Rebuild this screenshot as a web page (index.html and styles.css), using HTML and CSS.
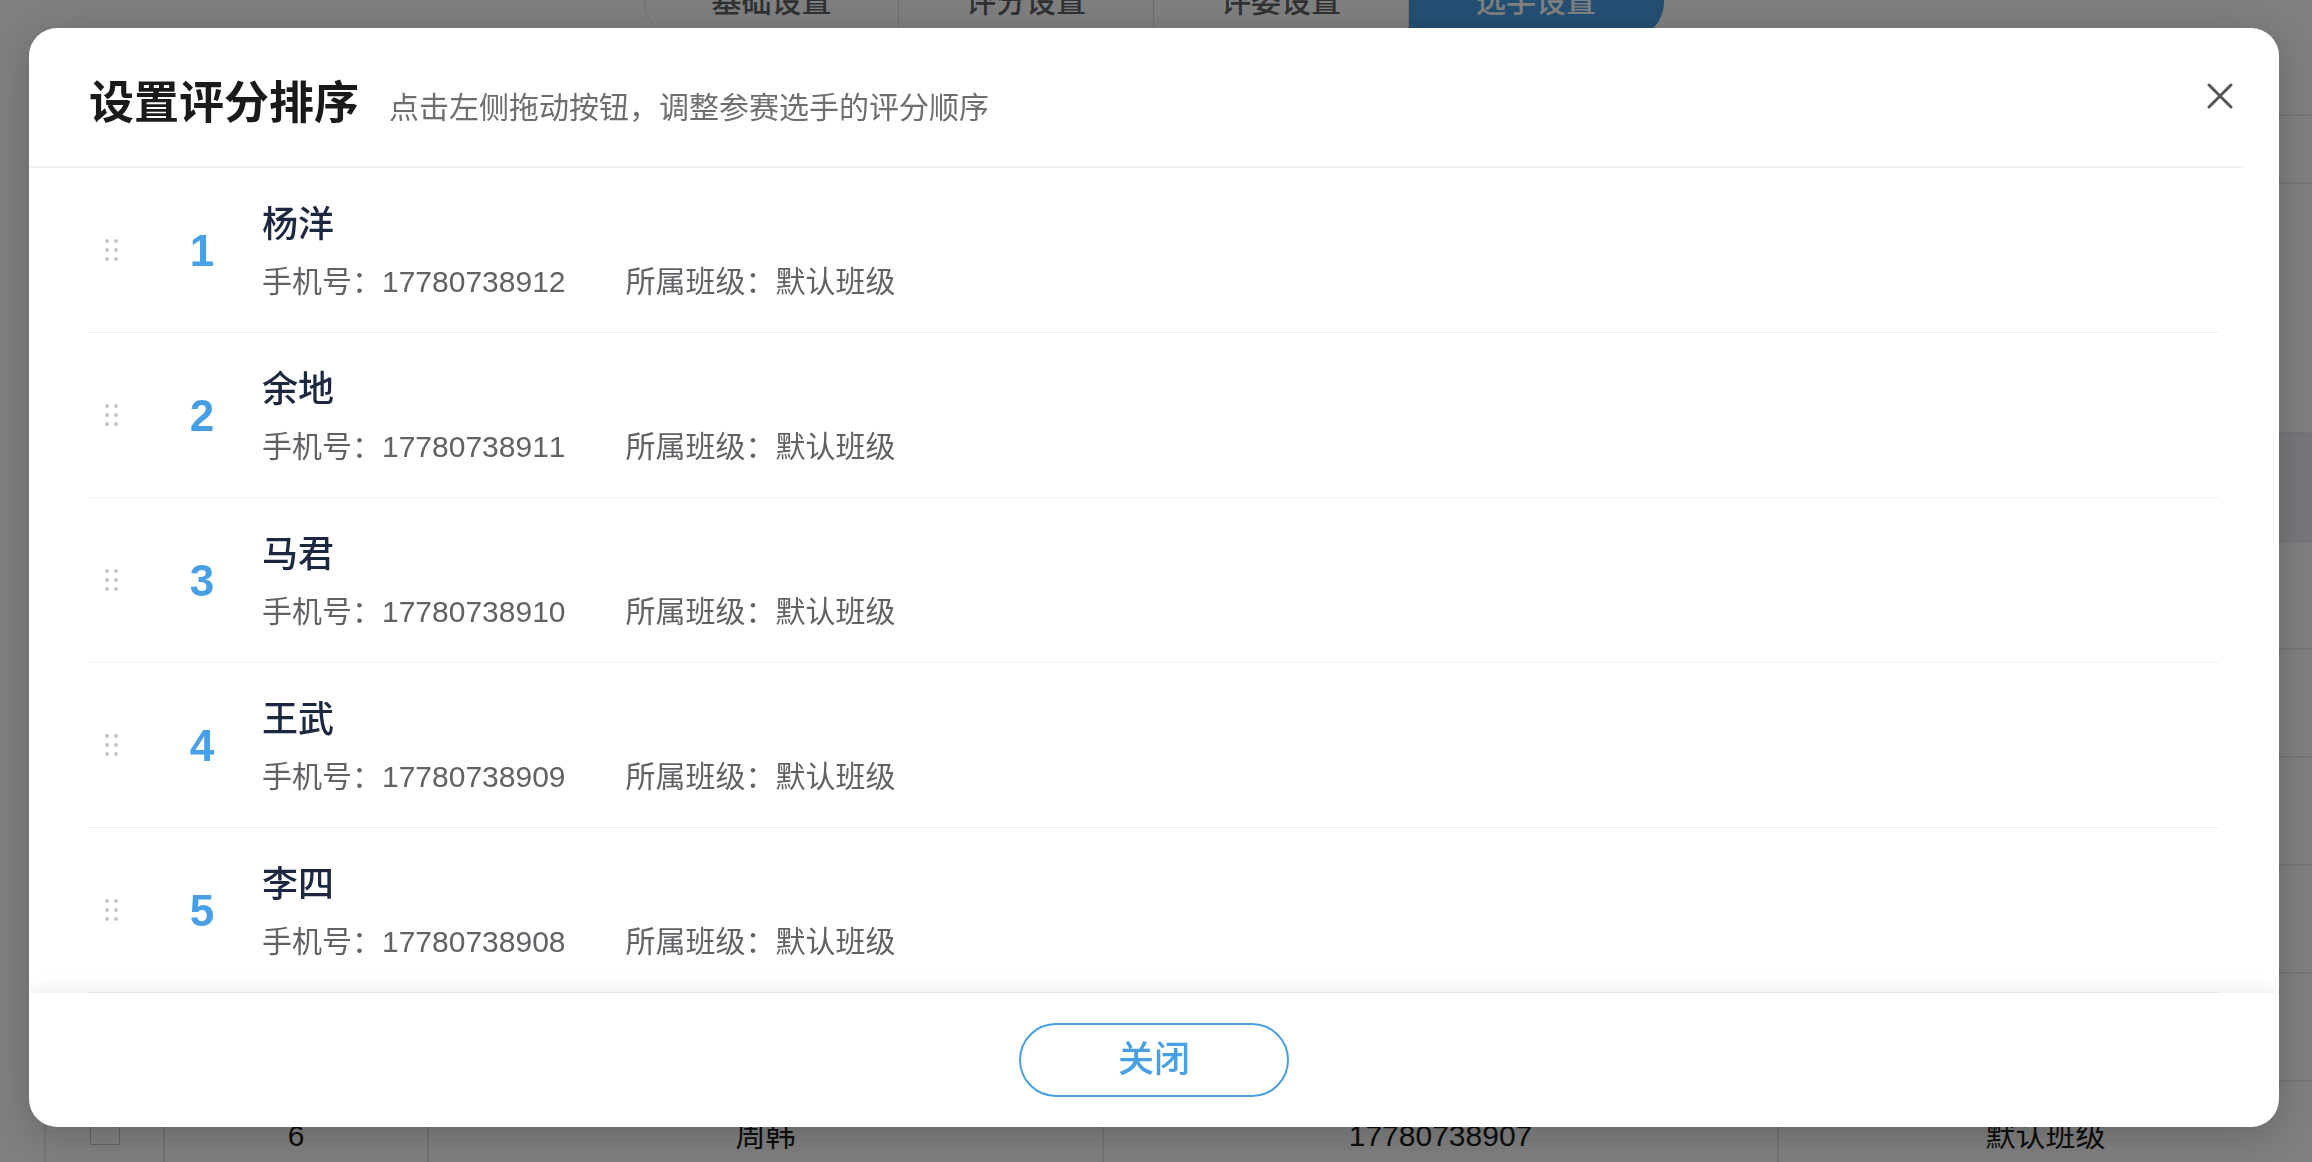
FILE: index.html
```html
<!DOCTYPE html>
<html lang="zh-CN">
<head>
  <meta charset="UTF-8">
  <meta name="viewport" content="width=device-width, initial-scale=1.0">
  <title>选手设置</title>
  <link rel="stylesheet" href="styles.css">
</head>
<body>
  <div class="page">
    <nav class="tabs">
      <a href="#basic" class="tab">基础设置</a>
      <a href="#score" class="tab">评分设置</a>
      <a href="#judge" class="tab">评委设置</a>
      <a href="#player" class="tab tab-active">选手设置</a>
    </nav>

    <div class="toolbar"></div>

    <table class="players">
      <thead>
        <tr><th class="col-check"></th><th class="col-index"></th><th class="col-name"></th><th class="col-phone"></th><th></th></tr>
      </thead>
      <tbody>
        <tr><td></td><td></td><td></td><td></td><td></td></tr>
        <tr><td></td><td></td><td></td><td></td><td></td></tr>
        <tr><td></td><td></td><td></td><td></td><td></td></tr>
        <tr><td></td><td></td><td></td><td></td><td></td></tr>
        <tr><td></td><td></td><td></td><td></td><td></td></tr>
        <tr>
          <td><input type="checkbox" class="check" aria-label="选择周韩"></td>
          <td>6</td>
          <td>周韩</td>
          <td>17780738907</td>
          <td>默认班级</td>
        </tr>
      </tbody>
    </table>
  </div>

  <div class="overlay">
    <section class="dialog" role="dialog" aria-modal="true" aria-labelledby="dialog-title">
      <header class="dialog-header">
        <h1 class="dialog-title" id="dialog-title">设置评分排序</h1>
        <p class="dialog-tip">点击左侧拖动按钮，调整参赛选手的评分顺序</p>
        <button type="button" class="dialog-close" aria-label="关闭">
          <svg viewBox="0 0 26 26" width="26" height="26" fill="none" stroke="currentColor" stroke-width="3" stroke-linecap="round">
            <path d="M2 2l22 22M24 2L2 24"/>
          </svg>
        </button>
      </header>

      <ol class="player-list">
        <li class="player">
          <button type="button" class="drag" aria-label="拖动">
            <svg viewBox="0 0 14 22" width="14" height="22" fill="currentColor"><circle cx="2" cy="2" r="2"/><circle cx="11" cy="2" r="2"/><circle cx="2" cy="11" r="2"/><circle cx="11" cy="11" r="2"/><circle cx="2" cy="20" r="2"/><circle cx="11" cy="20" r="2"/></svg>
          </button>
          <span class="rank">1</span>
          <div class="info">
            <h2 class="name">杨洋</h2>
            <p class="meta"><span>手机号：17780738912</span><span>所属班级：默认班级</span></p>
          </div>
        </li>
        <li class="player">
          <button type="button" class="drag" aria-label="拖动">
            <svg viewBox="0 0 14 22" width="14" height="22" fill="currentColor"><circle cx="2" cy="2" r="2"/><circle cx="11" cy="2" r="2"/><circle cx="2" cy="11" r="2"/><circle cx="11" cy="11" r="2"/><circle cx="2" cy="20" r="2"/><circle cx="11" cy="20" r="2"/></svg>
          </button>
          <span class="rank">2</span>
          <div class="info">
            <h2 class="name">余地</h2>
            <p class="meta"><span>手机号：17780738911</span><span>所属班级：默认班级</span></p>
          </div>
        </li>
        <li class="player">
          <button type="button" class="drag" aria-label="拖动">
            <svg viewBox="0 0 14 22" width="14" height="22" fill="currentColor"><circle cx="2" cy="2" r="2"/><circle cx="11" cy="2" r="2"/><circle cx="2" cy="11" r="2"/><circle cx="11" cy="11" r="2"/><circle cx="2" cy="20" r="2"/><circle cx="11" cy="20" r="2"/></svg>
          </button>
          <span class="rank">3</span>
          <div class="info">
            <h2 class="name">马君</h2>
            <p class="meta"><span>手机号：17780738910</span><span>所属班级：默认班级</span></p>
          </div>
        </li>
        <li class="player">
          <button type="button" class="drag" aria-label="拖动">
            <svg viewBox="0 0 14 22" width="14" height="22" fill="currentColor"><circle cx="2" cy="2" r="2"/><circle cx="11" cy="2" r="2"/><circle cx="2" cy="11" r="2"/><circle cx="11" cy="11" r="2"/><circle cx="2" cy="20" r="2"/><circle cx="11" cy="20" r="2"/></svg>
          </button>
          <span class="rank">4</span>
          <div class="info">
            <h2 class="name">王武</h2>
            <p class="meta"><span>手机号：17780738909</span><span>所属班级：默认班级</span></p>
          </div>
        </li>
        <li class="player">
          <button type="button" class="drag" aria-label="拖动">
            <svg viewBox="0 0 14 22" width="14" height="22" fill="currentColor"><circle cx="2" cy="2" r="2"/><circle cx="11" cy="2" r="2"/><circle cx="2" cy="11" r="2"/><circle cx="11" cy="11" r="2"/><circle cx="2" cy="20" r="2"/><circle cx="11" cy="20" r="2"/></svg>
          </button>
          <span class="rank">5</span>
          <div class="info">
            <h2 class="name">李四</h2>
            <p class="meta"><span>手机号：17780738908</span><span>所属班级：默认班级</span></p>
          </div>
        </li>
      </ol>

      <footer class="dialog-footer">
        <button type="button" class="btn-close">关闭</button>
      </footer>
    </section>
  </div>
</body>
</html>
```
FILE: styles.css
```css
:root {
  --blue: #479fe6;
  --line: #f0f0f6;
  --table-line: #e6e6f0;
  --text: #1a1a1a;
  --text-name: #1c2740;
  --text-meta: #606266;
  --text-tip: #6e6e6e;
  --drag: #c0c4cc;
}

* {
  margin: 0;
  padding: 0;
  box-sizing: border-box;
}

body {
  font-family: "Liberation Sans", "Noto Sans CJK SC", sans-serif;
  font-size: 30px;
  line-height: 44px;
  font-kerning: none;
  color: var(--text);
  background: #fff;
  overflow: hidden;
}

button {
  font: inherit;
  background: none;
  border: none;
  cursor: pointer;
}

/* Page behind the dialog */
.page {
  height: 100vh;
  overflow: hidden;
}

.tabs {
  display: flex;
  justify-content: center;
  height: 40px;
  margin-bottom: 74px;
  padding-right: 4px;
}

.tab {
  display: flex;
  align-items: center;
  justify-content: center;
  width: 255px;
  height: 76px;
  margin-top: -36px;
  border: 1px solid #dcdfe6;
  border-left-width: 0;
  font-weight: 500;
  color: #606266;
  text-decoration: none;
}

.tab:first-child {
  border-left-width: 1px;
  border-radius: 38px 0 0 38px;
}

.tab:last-child {
  border-radius: 0 38px 38px 0;
}

.tab-active {
  color: #fff;
  background: var(--blue);
  border-color: var(--blue);
}

.toolbar {
  height: 70px;
  margin: 0 0 248px 44px;
  border: 2px solid var(--table-line);
  border-right: none;
}

.players {
  width: calc(100% - 44px);
  margin-left: 44px;
  border-collapse: collapse;
  table-layout: fixed;
}

.players th,
.players td {
  height: 108px;
  border: 2px solid var(--table-line);
  text-align: center;
  vertical-align: middle;
}

.players td {
  padding-top: 2px;
}

.players th:last-child,
.players td:last-child {
  border-right: none;
}

.players th {
  background: #eceff4;
}

.players .col-check {
  width: 119px;
}

.players .col-index {
  width: 264px;
}

.players .col-name,
.players .col-phone {
  width: 675px;
}

.check {
  appearance: none;
  display: inline-block;
  width: 30px;
  height: 30px;
  margin-bottom: 14px;
  border: 1px solid #c8cad0;
  vertical-align: middle;
}

/* Dialog */
.overlay {
  position: fixed;
  inset: 0;
  padding: 28px 33px 35px 29px;
  background: rgba(0, 0, 0, 0.5);
}

.dialog {
  display: flex;
  flex-direction: column;
  height: 100%;
  border-radius: 28px;
  background: #fff;
  box-shadow: 0 8px 40px rgba(0, 0, 0, 0.2);
  overflow: hidden;
}

.dialog-header {
  display: flex;
  align-items: center;
  height: 140px;
  flex-shrink: 0;
  margin-right: 35px;
  padding: 14px 8px 0 60px;
  border-bottom: 2px solid var(--line);
}

.dialog-title {
  font-size: 45px;
  font-weight: 700;
  line-height: 60px;
}

.dialog-tip {
  flex: 1;
  margin-left: 30px;
  padding-top: 8px;
  color: var(--text-tip);
}

.dialog-close {
  width: 32px;
  height: 32px;
  margin-bottom: 16px;
  line-height: 0;
  color: #555;
}

.player-list {
  flex: 1;
  min-height: 0;
  padding: 0 60px;
  list-style: none;
  overflow: hidden;
}

.player {
  display: flex;
  align-items: center;
  height: 165px;
  border-bottom: 1px solid var(--line);
}

.drag {
  width: 46px;
  line-height: 0;
  color: var(--drag);
  cursor: move;
}

.rank {
  width: 70px;
  margin: 0 25px 0 32px;
  padding-top: 2px;
  font-size: 44px;
  font-weight: 700;
  text-align: center;
  color: var(--blue);
}

.info {
  padding-top: 4px;
}

.name {
  margin-bottom: 11px;
  font-size: 36px;
  font-weight: 500;
  line-height: 48px;
  color: var(--text-name);
}

.meta {
  display: flex;
  gap: 60px;
  color: var(--text-meta);
}

.dialog-footer {
  display: flex;
  align-items: center;
  justify-content: center;
  height: 134px;
  flex-shrink: 0;
  box-shadow: 0 0 20px rgba(0, 0, 0, 0.1);
}

.btn-close {
  width: 270px;
  height: 74px;
  border: 2px solid var(--blue);
  border-radius: 37px;
  font-size: 36px;
  font-weight: 500;
  color: var(--blue);
}
```
